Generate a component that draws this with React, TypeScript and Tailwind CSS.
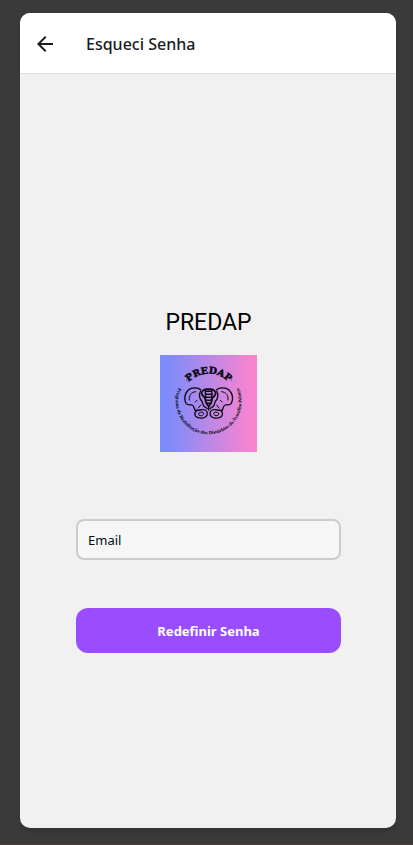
import { MdArrowBack } from "react-icons/md";

function Half() {
  return (
    <g fill="none" stroke="#0b0812" strokeLinecap="round" strokeLinejoin="round">
      <path strokeWidth="4" d="M137 119 C130 112 109 112 100 120 C89 130 86 148 93 160 C99 168 107 163 112 165 C119 168 116 179 123 184" />
      <path strokeWidth="3" d="M103 150 C101 138 108 126 122 125" />
      <path strokeWidth="4" d="M137 123 C131 134 133 147 141 154 C145 160 142 164 147 169 C151 173 154 171 157 176" />
      <path strokeWidth="4" d="M123 184 C116 191 120 201 129 203 C139 206 151 204 156 196 C159 186 154 179 145 179 C137 178 131 183 123 180" />
      <path strokeWidth="3" d="M131 190 C129 195 134 198 139 197 C145 196 148 191 145 188 C141 185 134 186 131 190" />
      <path strokeWidth="3" d="M121 156 L126 151 M137 165 L130 174" />
      <path strokeWidth="5" d="M161 118 C151 116 141 120 140 130 C141 139 148 139 150 145 C152 155 153 164 161 168" />
      <path strokeWidth="4" d="M151 121 L152 145 M161 124 L151 123 M161 133 L150 132 M161 142 L151 141 M161 151 L153 150 M161 160 L156 159" />
    </g>
  );
}

function Logo() {
  return (
    <svg viewBox="15 15 291 291" className="mt-4 size-[97px]" role="img" aria-label="PREDAP">
      <defs>
        <linearGradient id="sky" x1="0" x2="1" y1="0" y2="0">
          <stop offset="0" stopColor="#7a8cff" />
          <stop offset="0.12" stopColor="#828bfa" />
          <stop offset="0.9" stopColor="#f484d2" />
          <stop offset="1" stopColor="#fb84ce" />
        </linearGradient>
        <path id="top" d="M77 155 A84 84 0 0 1 245 155" />
        <path id="ring" d="M80 97 A99 99 0 1 0 242 97" />
      </defs>
      <rect x="15" y="15" width="291" height="291" fill="url(#sky)" />
      <text
        fill="#0b0812"
        stroke="#0b0812"
        strokeWidth="1.5"
        fontSize="28"
        fontWeight="700"
        textAnchor="middle"
        className="font-['DejaVu_Serif',serif]"
      >
        <textPath href="#top" startOffset="50%">PREDAP</textPath>
      </text>
      <text
        fill="#0b0812"
        fontSize="15"
        fontWeight="700"
        textAnchor="middle"
        className="font-['Liberation_Serif',serif]"
      >
        <textPath href="#ring" startOffset="50%">Programa de Reabilitação dos Distúrbios do Assoalho Pélvico</textPath>
      </text>
      <circle cx="95" cy="90" r="1.5" fill="#0b0812" />
      <circle cx="229" cy="90" r="1.5" fill="#0b0812" />
      <Half />
      <g transform="translate(322 0) scale(-1 1)">
        <Half />
      </g>
      <path d="M161 168 V182" stroke="#0b0812" strokeWidth="4" />
    </svg>
  );
}

export default function App() {
  return (
    <div className="flex min-h-screen border-b border-[#4a3d3d] bg-[#3a3a3a] pt-[13px] pr-[17px] pb-4 pl-5 font-['Noto_Sans',sans-serif]">
      <main className="flex flex-1 flex-col overflow-hidden rounded-[10px] bg-[#f1f1f1] shadow-md">
        <header className="flex h-[61px] items-center border-b border-[#e0e0e0] bg-white pt-0.5 pl-[13px]">
          <button type="button" aria-label="Voltar" className="text-[#1c1c1e]">
            <MdArrowBack size={24} />
          </button>
          <h1 className="ml-[29px] text-base font-medium text-[#1c1c1e]">Esqueci Senha</h1>
        </header>
        <form className="flex flex-col items-center pt-[233px] pr-[55px] pb-8 pl-14">
          <h2 className="font-[Roboto,sans-serif] text-[23px] leading-8 text-black">PREDAP</h2>
          <Logo />
          <input
            type="email"
            aria-label="Email"
            placeholder="Email"
            className="mt-[67px] h-[41px] w-full rounded-lg border-2 border-[#cccccc] bg-[#f6f6f6] px-[10px] text-[13px] text-black placeholder:text-[#001018]"
          />
          <button type="button" className="mt-12 h-[45px] w-full rounded-xl bg-[#994dff] pt-0.5 text-[13px] font-bold text-white">
            Redefinir Senha
          </button>
        </form>
      </main>
    </div>
  );
}
